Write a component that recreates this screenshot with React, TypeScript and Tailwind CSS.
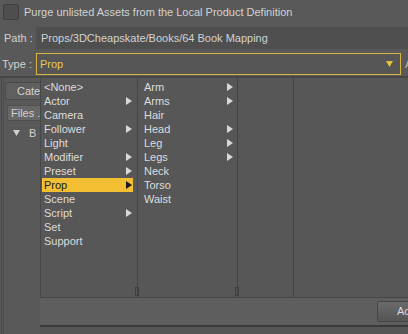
import React from "react";

const cats = [
  { label: "<None>", sub: false },
  { label: "Actor", sub: true },
  { label: "Camera", sub: false },
  { label: "Follower", sub: true },
  { label: "Light", sub: false },
  { label: "Modifier", sub: true },
  { label: "Preset", sub: true },
  { label: "Prop", sub: true, active: true },
  { label: "Scene", sub: false },
  { label: "Script", sub: true },
  { label: "Set", sub: false },
  { label: "Support", sub: false },
];

const parts = [
  { label: "Arm", sub: true },
  { label: "Arms", sub: true },
  { label: "Hair", sub: false },
  { label: "Head", sub: true },
  { label: "Leg", sub: true },
  { label: "Legs", sub: true },
  { label: "Neck", sub: false },
  { label: "Torso", sub: false },
  { label: "Waist", sub: false },
];

const Arrow = ({ dark }: { dark?: boolean }) => (
  <svg width="6" height="8" viewBox="0 0 6 8">
    <polygon points="0,0 6,4 0,8" fill={dark ? "#1c1c1c" : "#d8d8d8"} />
  </svg>
);

export default function App() {
  return (
    <div className="w-[408px] h-[334px] bg-[#595959] overflow-hidden flex flex-col text-[11px] leading-none text-[#d2d2d2] font-['Liberation_Sans',Arial,sans-serif]">
      {/* purge checkbox */}
      <div className="h-[24px] shrink-0 flex items-center pl-[3px] gap-[5px]">
        <div className="w-[16px] h-[16px] bg-[#4e4e4e] border border-[#3f3f3f] rounded-[2px]" />
        <span>Purge unlisted Assets from the Local Product Definition</span>
      </div>

      {/* path */}
      <div className="h-[28px] shrink-0 flex items-center">
        <span className="w-[36px] shrink-0 pl-[4px]">Path :</span>
        <div className="flex-1 h-[22px] bg-[#4f4f4f] flex items-center pl-[5px]">
          Props/3DCheapskate/Books/64 Book Mapping
        </div>
      </div>

      {/* type combo */}
      <div className="h-[24px] shrink-0 flex items-center">
        <span className="w-[36px] shrink-0 pl-[2px]">Type :</span>
        <div className="w-[365px] shrink-0 h-[22px] border border-[#d6b640] bg-[#565656] flex items-center justify-between pl-[3px] pr-[7px]">
          <span className="text-[#e8c84a]">Prop</span>
          <svg width="7" height="6" viewBox="0 0 7 6">
            <polygon points="0,0 7,0 3.5,6" fill="#e6c23a" />
          </svg>
        </div>
        <span className="ml-[4px] text-[#b8b8b8]">A</span>
      </div>
      <div className="h-[2px] shrink-0 bg-[#474747]" />

      <div className="flex-1 flex min-h-0">
        {/* underlying panel strip */}
        <div className="w-[40px] shrink-0 flex pl-[1px]">
          <div className="flex-1 border-l border-[#474747] pl-[1px]">
            <div className="h-full border-l border-[#4c4c4c] flex flex-col">
              <div className="mt-[4px] ml-[1px] h-[18px] bg-[#5f5f5f] border border-r-0 border-[#4a4a4a] rounded-tl-[3px] flex items-center pl-[11px]">
                Cate
              </div>
              <div className="mt-[5px] ml-[3px] h-[16px] bg-[#676767] border border-r-0 border-[#505050] flex items-center pl-[3px] whitespace-nowrap overflow-hidden">
                Files .
              </div>
              <div className="mt-[6px] flex items-center pl-[9px] gap-[9px] h-[12px]">
                <svg width="7" height="6" viewBox="0 0 7 6">
                  <polygon points="0,0 7,0 3.5,6" fill="#d0d0d0" />
                </svg>
                <span>B</span>
              </div>
            </div>
          </div>
        </div>

        <div className="flex-1 flex flex-col">
          {/* column popup */}
          <div className="h-[220px] shrink-0 flex bg-[#575757] border-l border-b border-[#474747]">
            <div className="w-[97px] shrink-0 border-r border-[#454545] pt-[2px] px-[1px] relative">
              {cats.map((c) => (
                <div
                  key={c.label}
                  className={
                    c.active
                      ? "h-[14px] w-[91px] flex items-center justify-between pl-[2px] pr-[1px] bg-[#f2bf33] text-[#1c1c1c]"
                      : "h-[14px] w-[91px] flex items-center justify-between pl-[2px] pr-[1px] text-[#dcdcdc]"
                  }
                >
                  <span>{c.label}</span>
                  {c.sub && <Arrow dark={c.active} />}
                </div>
              ))}
              <div className="absolute right-[-2px] bottom-[1px] w-[4px] h-[9px] border border-[#3e3e3e]" />
            </div>
            <div className="w-[100px] shrink-0 border-r border-[#454545] pt-[2px] pl-[6px] relative">
              {parts.map((p) => (
                <div
                  key={p.label}
                  className="h-[14px] w-[89px] flex items-center justify-between text-[#dcdcdc]"
                >
                  <span>{p.label}</span>
                  {p.sub && <Arrow />}
                </div>
              ))}
              <div className="absolute right-[-2px] bottom-[1px] w-[4px] h-[9px] border border-[#3e3e3e]" />
            </div>
            <div className="w-[56px] shrink-0 border-r border-[#454545]" />
            <div className="flex-1" />
          </div>

          {/* dialog footer */}
          <div className="h-[27px] shrink-0 bg-[#5e5e5e] flex justify-end items-start pt-[3px]">
            <div className="w-[40px] h-[21px] mr-[-9px] border border-[#454545] rounded-[2px] bg-gradient-to-b from-[#6a6a6a] to-[#555555] flex items-center pl-[19px] text-[#dadada] whitespace-nowrap overflow-hidden">
              Accept
            </div>
          </div>
          <div className="h-[2px] shrink-0 bg-[#3a3a3a]" />
          <div className="flex-1 bg-[#565656]" />
        </div>
      </div>
    </div>
  );
}
